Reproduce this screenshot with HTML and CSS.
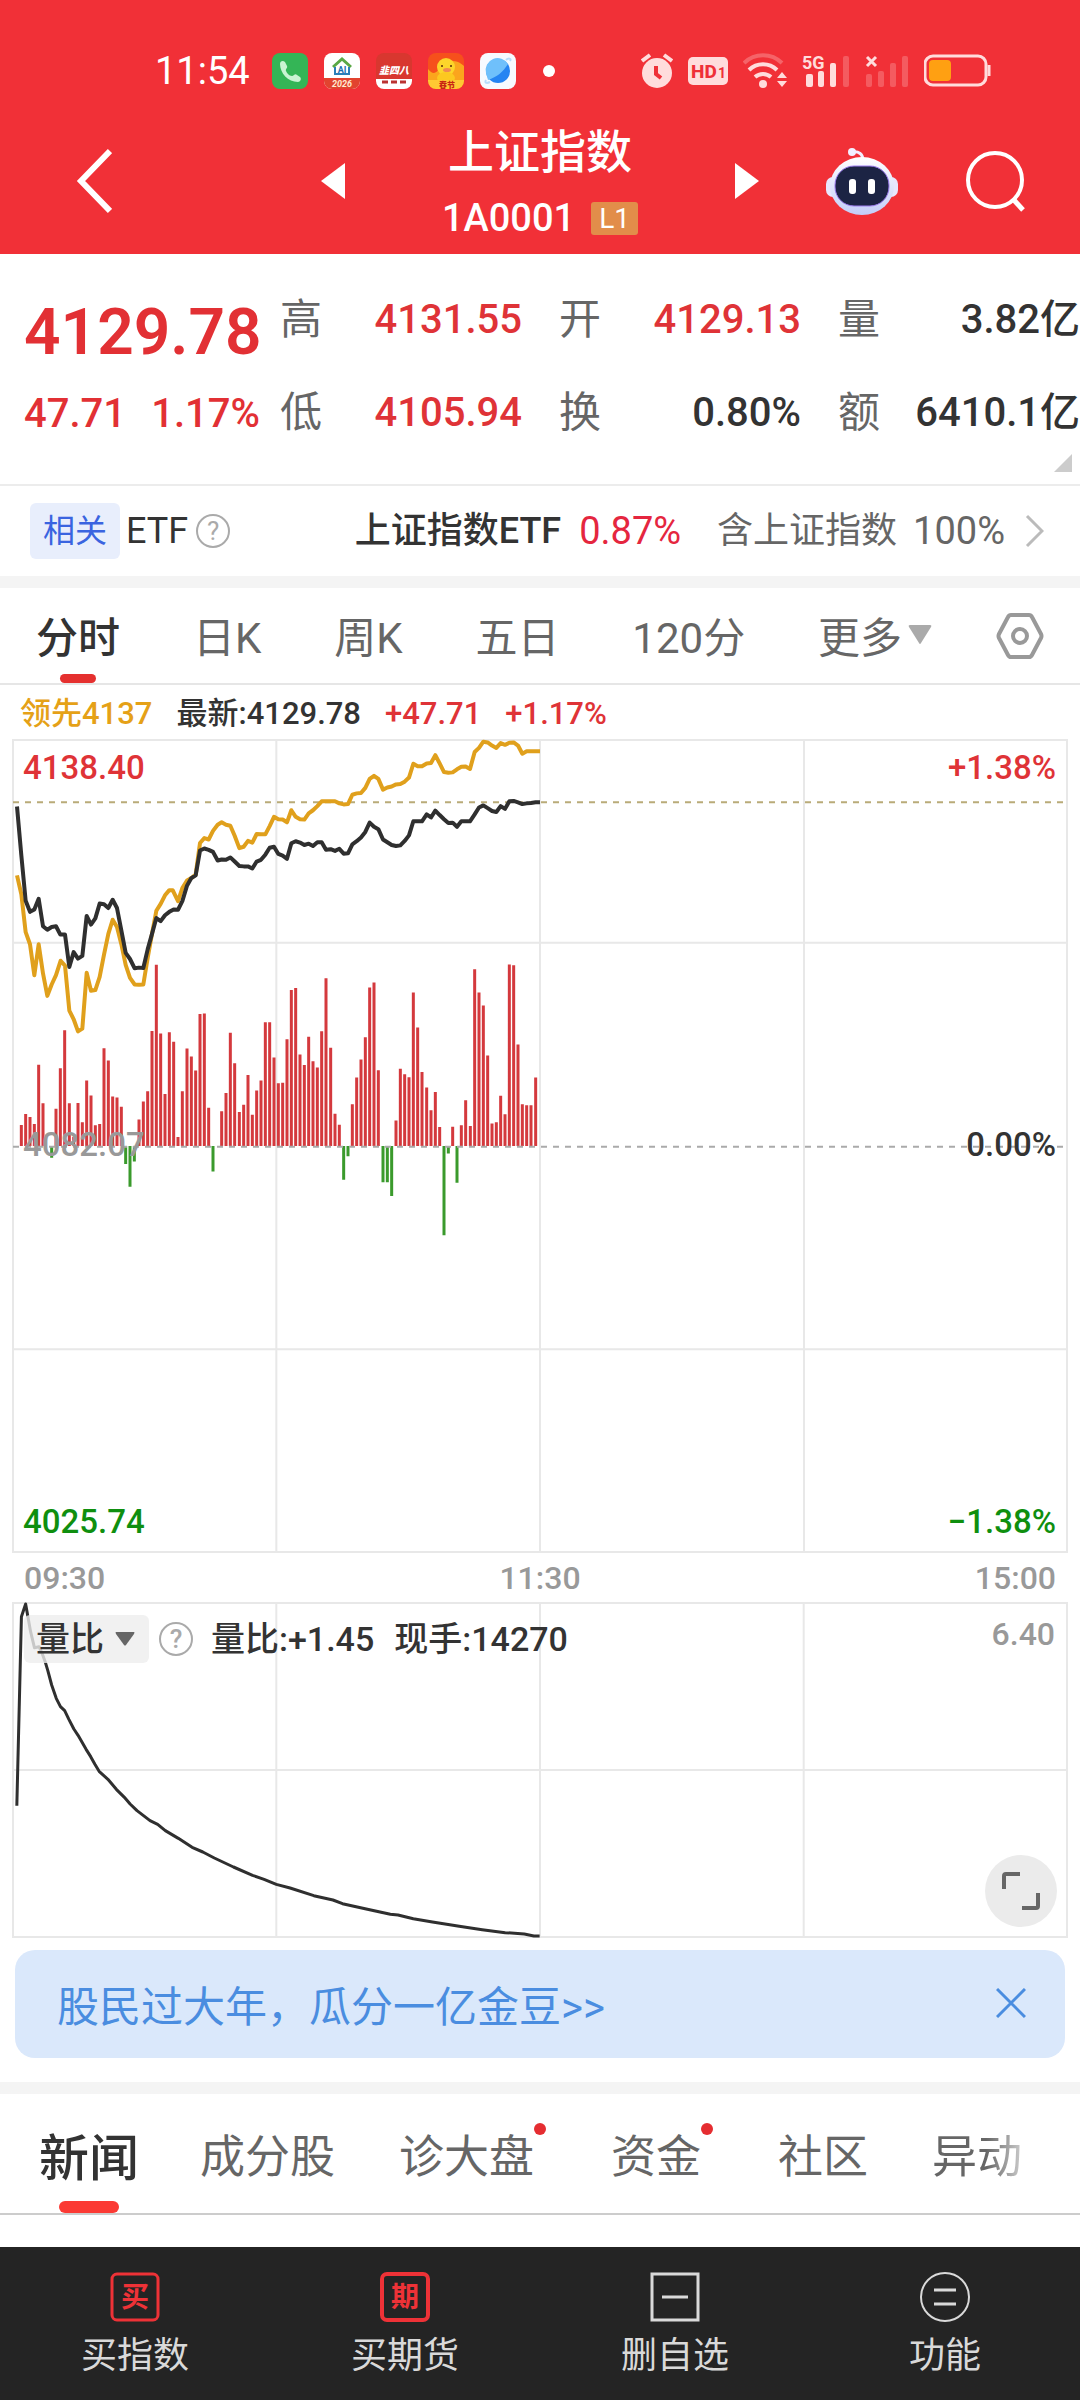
FILE: index.html
```html
<!DOCTYPE html>
<html lang="zh-CN">
<head>
<meta charset="utf-8">
<meta name="viewport" content="width=device-width">
<title>上证指数 1A0001</title>
<link rel="stylesheet" href="styles.css">
</head>
<body>
<div class="page">
  <header class="header">
    <div class="status">
      <div class="status-left">
        <span class="clock">11:54</span>
        <svg class="app" viewBox="0 0 36 36"><rect width="36" height="36" rx="8" fill="#34b556"/><path d="M8 11c0-3 3-4 5-2l2 4c1 2-2 3-1 5 1 2 3 5 6 5 2 0 3-3 5-1l3 2c2 2 0 5-2 5C16 29 8 20 8 11z" fill="#c9f3d2"/></svg>
        <svg class="app" viewBox="0 0 36 36"><rect width="36" height="36" rx="8" fill="#fff"/><path d="M0 25h36v3a8 8 0 0 1-8 8H8a8 8 0 0 1-8-8z" fill="#e2432f"/><path d="M9 14 18 6l9 8" fill="none" stroke="#5aa845" stroke-width="3"/><path d="M11 14v7h14v-7" fill="none" stroke="#2b7fb8" stroke-width="2"/><text x="18" y="20" font-size="9" font-weight="700" text-anchor="middle" fill="#1c6fb0">AI</text><text x="18" y="34" font-size="9" font-style="italic" font-weight="700" text-anchor="middle" fill="#ffe9d0">2026</text></svg>
        <svg class="app" viewBox="0 0 36 36"><rect width="36" height="36" rx="8" fill="#d8372f"/><path d="M0 26h36v2a8 8 0 0 1-8 8H8a8 8 0 0 1-8-8z" fill="#fff"/><text x="18" y="21" font-size="10" font-style="italic" font-weight="900" text-anchor="middle" fill="#fff">韭四八</text><path d="M6 29h6M15 29h6M24 29h6" stroke="#b33" stroke-width="3"/></svg>
        <svg class="app" viewBox="0 0 36 36"><rect width="36" height="36" rx="8" fill="#f6501c"/><path d="M25 8c6 0 11 5 11 5v15H0V16c6 8 10 2 12-2z" fill="#fba51d"/><circle cx="18" cy="14" r="9" fill="#fcd52b"/><ellipse cx="18" cy="25" rx="9" ry="6" fill="#fcc820"/><circle cx="14" cy="13" r="1" fill="#5b2a08"/><circle cx="23" cy="13" r="1" fill="#5b2a08"/><ellipse cx="19" cy="17" rx="4" ry="2" fill="#f08a50"/><path d="M0 27h36v1a8 8 0 0 1-8 8H8a8 8 0 0 1-8-8z" fill="#ffc933"/><text x="19" y="35" font-size="8" font-weight="900" text-anchor="middle" fill="#c92713">春节</text></svg>
        <svg class="app" viewBox="0 0 36 36"><rect width="36" height="36" rx="8" fill="#f7faff"/><circle cx="18" cy="18" r="12" fill="#2584f2"/><path d="M6 20a12 12 0 0 1 22-9c-5 8-11 13-20 16z" fill="#6fc0fb"/><path d="M30 8c2-3-2-3-4-1M6 27c-2 4 2 3 4 2" stroke="#b7dcfb" fill="none" stroke-width="2"/></svg>
        <span class="more-dot"></span>
      </div>
      <div class="status-right">
        <svg width="32" height="36" viewBox="0 0 32 36"><circle cx="16" cy="20" r="15" fill="#ffdcdc"/><path d="M1 8 9 2M31 8l-8-6" stroke="#ffdcdc" stroke-width="4"/><path d="M15 13v8l5 4" fill="none" stroke="#ef3038" stroke-width="4"/></svg>
        <svg width="40" height="36" viewBox="0 0 40 36"><rect y="4" width="40" height="28" rx="5" fill="#ffdcdc"/><text x="3" y="25" font-size="19" font-weight="800" fill="#ef3038">HD</text><text x="30" y="25" font-size="14" font-weight="700" fill="#ef3038">1</text></svg>
        <svg width="44" height="36" viewBox="0 0 44 36"><g fill="none" stroke="#ffdcdc" stroke-width="4"><path d="M1 10a27 27 0 0 1 38 0" opacity=".3"/><path d="M6 17a20 20 0 0 1 28 0"/><path d="M12 24a12 12 0 0 1 16 0"/></g><circle cx="20" cy="31" r="4" fill="#ffdcdc"/><path d="M34 25h10l-5-6zM34 28h10l-5 6z" fill="#ffdcdc"/></svg>
        <svg width="48" height="36" viewBox="0 0 48 36"><text x="0" y="16" font-size="18" font-weight="700" fill="#ffdcdc">5G</text><g fill="#ffdcdc"><rect x="4" y="21" width="7" height="13" rx="2"/><rect x="16" y="18" width="6" height="16" rx="2"/><rect x="28" y="10" width="6" height="24" rx="2"/><rect x="41" y="3" width="6" height="31" rx="2" opacity=".25"/></g></svg>
        <svg width="44" height="36" viewBox="0 0 44 36"><path d="m2 4 9 9m0-9-9 9" stroke="#ffdcdc" stroke-width="3"/><g fill="#ffdcdc" opacity=".25"><rect x="1" y="21" width="6" height="13" rx="2"/><rect x="13" y="18" width="6" height="16" rx="2"/><rect x="25" y="10" width="6" height="24" rx="2"/><rect x="37" y="3" width="6" height="31" rx="2"/></g></svg>
        <svg width="67" height="36" viewBox="0 0 67 36"><rect x="1" y="3" width="61" height="29" rx="8" fill="none" stroke="#ffdcdc" stroke-width="3"/><rect x="5" y="7" width="22" height="21" rx="4" fill="#ffa012"/><path d="M65 12v11" stroke="#ffdcdc" stroke-width="3"/></svg>
      </div>
    </div>
    <div class="nav">
      <button class="icon-btn" aria-label="返回"><svg width="36" height="66" viewBox="0 0 36 66"><path d="M34 3 5 33l29 30" fill="none" stroke="#fff" stroke-width="6"/></svg></button>
      <div class="nav-center">
        <button class="icon-btn" aria-label="上一个"><svg width="24" height="36" viewBox="0 0 24 36"><path d="M24 0v36L0 18z" fill="#fff"/></svg></button>
        <div class="title-block">
          <h1 class="title">上证指数</h1>
          <div class="code-row"><span class="code">1A0001</span><span class="level">L1</span></div>
        </div>
        <button class="icon-btn" aria-label="下一个"><svg width="24" height="36" viewBox="0 0 24 36"><path d="M0 0v36l24-18z" fill="#fff"/></svg></button>
      </div>
      <div class="nav-right">
        <button class="icon-btn" aria-label="智能助手"><svg width="72" height="68" viewBox="0 0 72 68"><defs><linearGradient id="shell" x1="0" y1="0" x2="0" y2="1"><stop offset="0" stop-color="#fff"/><stop offset="1" stop-color="#c3cdf8"/></linearGradient></defs><path d="M26 5c7-1 11 2 11 9" fill="none" stroke="#f3efff" stroke-width="3"/><circle cx="26" cy="5" r="4" fill="#f3efff"/><rect y="30" width="72" height="20" rx="7" fill="#e8e6fd"/><ellipse cx="36" cy="39" rx="32" ry="29" fill="url(#shell)"/><rect x="9" y="19" width="54" height="40" rx="19" fill="#1c2444" stroke="#9d7cf0" stroke-width="1"/><rect x="23" y="32" width="7" height="15" rx="3" fill="#fff"/><rect x="42" y="32" width="7" height="15" rx="3" fill="#fff"/></svg></button>
        <button class="icon-btn" aria-label="搜索"><svg width="60" height="62" viewBox="0 0 60 62"><circle cx="29" cy="30" r="27" fill="none" stroke="#fff" stroke-width="4"/><path d="m47 49 10 11" stroke="#fff" stroke-width="5"/></svg></button>
      </div>
    </div>
  </header>

  <main>
    <section class="quote">
      <div class="quote-main">
        <strong class="price">4129.78</strong>
        <div class="change"><span>47.71</span><span>1.17%</span></div>
      </div>
      <dl class="stats">
        <div class="stat"><dt>高</dt><dd class="up">4131.55</dd></div>
        <div class="stat"><dt>开</dt><dd class="up">4129.13</dd></div>
        <div class="stat"><dt>量</dt><dd>3.82亿</dd></div>
        <div class="stat"><dt>低</dt><dd class="up">4105.94</dd></div>
        <div class="stat"><dt>换</dt><dd>0.80%</dd></div>
        <div class="stat"><dt>额</dt><dd>6410.1亿</dd></div>
      </dl>
      <span class="corner"></span>
    </section>

    <section class="etf">
      <span class="tag">相关</span>
      <span>ETF</span>
      <button class="help" aria-label="说明">?</button>
      <a class="etf-link" href="#etf"><span class="etf-name">上证指数ETF</span><span class="etf-rate">0.87%</span><span class="etf-note">含上证指数</span><span class="etf-share">100%</span><svg width="19" height="34" viewBox="0 0 19 34"><path d="m2 2 15 15L2 32" fill="none" stroke="#bbb" stroke-width="3"/></svg></a>
    </section>

    <nav class="periods">
      <button class="period active">分时</button>
      <button class="period">日K</button>
      <button class="period">周K</button>
      <button class="period">五日</button>
      <button class="period">120分</button>
      <button class="period more">更多<svg width="24" height="20" viewBox="0 0 24 20"><path d="M2 0h20q2 0 1 2L13 18q-1 2-2 0L1 2Q0 0 2 0z" fill="#aaa"/></svg></button>
      <button class="icon-btn" aria-label="设置"><svg width="48" height="48" viewBox="0 0 48 48"><path d="M15 3h18q2 0 3 2l9 17q1 2 0 4l-9 17q-1 2-3 2H15q-2 0-3-2L3 26q-1-2 0-4l9-17q1-2 3-2z" fill="none" stroke="#999" stroke-width="4"/><circle cx="24" cy="24" r="7" fill="none" stroke="#999" stroke-width="4"/></svg></button>
    </nav>

    <div class="legend"><span class="lead">领先4137</span><span>最新:4129.78</span><span class="up">+47.71</span><span class="up">+1.17%</span></div>

    <section class="chart">
      <svg class="plot" viewBox="39 57 3162 2358" preserveAspectRatio="none">
        <g class="grid"><path d="M39 57H3201V2415H39zM39 646H3201M39 1826H3201M829 57V2415M1620 57V2415M2412 57V2415"/></g>
        <path class="latest-line" d="M39 238H3201"/>
        <path class="bar-up" d="M64 1236V1175M77 1236V1143M90 1236V1152M103 1236V1172M116 1236V1000M129 1236V1112M168 1236V1128M181 1236V1010M194 1236V900M208 1236V1112M221 1236V1210M234 1236V1111M247 1236V1167M260 1236V1046M273 1236V1089M286 1236V1176M299 1236V1172M312 1236V952M325 1236V988M338 1236V1092M351 1236V1095M364 1236V1122M417 1236V1159M430 1236V1107M443 1236V1077M456 1236V902M469 1236V710M482 1236V909M495 1236V1085M508 1236V906M521 1236V933M534 1236V1210M547 1236V1077M561 1236V953M574 1236V976M587 1236V1017M600 1236V853M613 1236V851M626 1236V1125M665 1236V1135M678 1236V1082M691 1236V907M704 1236V996M718 1236V1137M731 1236V1116M744 1236V1030M757 1236V1145M770 1236V1075M783 1236V1046M796 1236V877M809 1236V877M822 1236V979M835 1236V1054M848 1236V1052M861 1236V926M874 1236V783M887 1236V777M900 1236V970M913 1236V1001M926 1236V919M939 1236V990M952 1236V1008M965 1236V903M978 1236V749M992 1236V951M1005 1236V1142M1018 1236V1174M1057 1236V1115M1070 1236V1037M1083 1236V985M1096 1236V920M1109 1236V776M1122 1236V761M1135 1236V1016M1188 1236V1162M1201 1236V1012M1214 1236V1028M1227 1236V1036M1240 1236V790M1253 1236V892M1266 1236V1021M1280 1236V1066M1293 1236V1132M1306 1236V1079M1319 1236V1181M1358 1236V1180M1384 1236V1176M1397 1236V1103M1411 1236V1178M1424 1236V723M1437 1236V790M1450 1236V828M1463 1236V973M1476 1236V1171M1489 1236V1167M1502 1236V1090M1515 1236V1144M1528 1236V709M1541 1236V711M1554 1236V941M1567 1236V1115M1580 1236V1118M1593 1236V1118M1607 1236V1037"/>
        <path class="bar-down" d="M155 1236V1270M377 1236V1288M390 1236V1354M403 1236V1281M639 1236V1310M1031 1236V1334M1044 1236V1266M1149 1236V1341M1162 1236V1341M1175 1236V1381M1332 1236V1495M1345 1236V1258M1371 1236V1343"/>
        <path class="zero-line" d="M39 1238H3201"/>
        <polyline class="lead-line" points="51,450 64,505 77,615 90,650 103,740 116,650 129,735 142,800 155,767 168,740 182,698 195,712 208,843 221,868 234,903 247,895 260,733 273,785 286,783 299,745 312,680 325,620 338,579 351,600 364,650 377,710 390,748 404,767 417,768 430,767 443,690 456,620 469,553 482,533 495,508 508,493 518,493 534,525 547,487 561,465 574,458 587,448 600,356 613,342 626,346 639,321 653,303 665,296 678,303 691,306 704,335 718,371 731,367 744,350 757,355 770,330 783,331 796,331 809,307 822,280 835,287 848,288 861,296 874,261 887,280 900,287 913,288 926,270 939,261 952,249 965,235 978,235 1005,235 1018,241 1031,244 1044,243 1057,216 1070,212 1083,211 1096,196 1109,170 1122,161 1135,170 1149,201 1162,195 1175,192 1188,186 1201,185 1214,178 1227,166 1240,126 1253,133 1266,133 1280,125 1293,124 1306,101 1319,125 1332,150 1345,152 1358,151 1371,142 1384,135 1397,134 1410,141 1424,92 1437,80 1450,62 1463,64 1476,73 1489,80 1502,66 1515,71 1528,65 1541,64 1554,73 1567,97 1580,90 1620,90"/>
        <polyline class="price-line" points="51,250 64,392 77,524 90,556 103,549 116,518 129,598 142,608 155,600 168,598 181,622 195,622 208,716 221,673 234,692 247,684 260,568 273,593 286,575 299,532 312,534 325,545 338,521 351,545 364,610 377,675 390,693 404,720 417,718 430,719 443,665 456,620 469,574 482,583 495,566 508,556 521,549 534,550 547,525 561,480 574,458 587,450 600,378 613,372 626,376 639,382 653,407 665,404 678,405 691,398 704,410 718,423 731,424 744,424 757,430 770,410 783,405 796,390 809,370 822,367 835,388 848,393 861,402 874,357 887,351 900,355 913,362 926,358 939,365 952,354 965,354 978,376 992,374 1005,379 1018,373 1031,387 1044,386 1057,360 1070,351 1083,340 1096,324 1109,297 1122,309 1135,316 1149,346 1162,354 1175,362 1188,365 1201,363 1214,350 1227,334 1240,293 1253,293 1266,293 1280,273 1293,282 1306,262 1319,275 1332,287 1345,298 1358,297 1371,309 1384,293 1397,293 1410,293 1424,273 1437,253 1450,247 1463,255 1476,263 1489,266 1502,249 1515,257 1528,235 1541,234 1554,238 1567,243 1580,241 1593,240 1607,238 1620,238"/>
      </svg>
      <div class="scale">
        <div class="scale-row up"><span>4138.40</span><span>+1.38%</span></div>
        <div class="scale-row"><span class="base">4082.07</span><span>0.00%</span></div>
        <div class="scale-row down"><span>4025.74</span><span>−1.38%</span></div>
      </div>
    </section>

    <div class="times"><span>09:30</span><span>11:30</span><span>15:00</span></div>

    <section class="chart sub-chart">
      <svg class="plot" viewBox="34 309 2754 1002" preserveAspectRatio="none">
        <g class="grid"><path d="M34 309H2788V1311H34zM34 810H2788M722 309V1311M1411 309V1311M2100 309V1311"/></g>
        <polyline class="ratio-line" points="44,917 56,350 67,312 80,395 90,443 102,440 110,460 118,485 125,512 135,555 147,595 158,620 169,632 180,658 193,687 204,706 225,748 237,770 248,793 259,814 282,838 304,868 325,892 340,912 358,932 392,962 412,973 432,992 466,1015 502,1042 530,1056 560,1074 610,1101 660,1126 690,1138 722,1153 758,1164 820,1187 870,1200 895,1211 960,1228 1020,1243 1040,1245 1080,1256 1130,1266 1200,1279 1260,1289 1320,1298 1370,1302 1395,1308 1410,1308"/>
      </svg>
      <div class="sub-bar">
        <button class="picker">量比<svg width="20" height="14" viewBox="0 0 20 14"><path d="M1 0h18q1 0 0 2L11 13q-1 1-2 0L1 2Q0 0 1 0z" fill="#666"/></svg></button>
        <button class="help" aria-label="量比说明">?</button>
        <span>量比:+1.45</span><span class="hand">现手:14270</span>
        <span class="sub-max">6.40</span>
      </div>
      <button class="expand" aria-label="全屏"><svg width="38" height="38" viewBox="0 0 38 38"><path d="M2 17V4q0-2 2-2h14M36 21v13q0 2-2 2H20" fill="none" stroke="#666" stroke-width="4"/></svg></button>
    </section>

    <div class="banner">
      <a href="#event">股民过大年，瓜分一亿金豆&gt;&gt;</a>
      <button class="icon-btn" aria-label="关闭"><svg width="30" height="30" viewBox="0 0 30 30"><path d="m1 1 28 28m0-28L1 29" stroke="#4a8de0" stroke-width="3"/></svg></button>
    </div>

    <nav class="topics">
      <button class="topic active">新闻</button>
      <button class="topic">成分股</button>
      <button class="topic dotted">诊大盘</button>
      <button class="topic dotted">资金</button>
      <button class="topic">社区</button>
      <button class="topic fading">异动</button>
    </nav>
  </main>

  <footer class="actions">
    <button class="action"><svg width="50" height="50" viewBox="0 0 50 50"><rect x="2" y="2" width="46" height="46" rx="5" fill="none" stroke="#ee3237" stroke-width="3"/><text x="25" y="35" font-size="28" font-weight="700" text-anchor="middle" fill="#ee3237">买</text></svg><span>买指数</span></button>
    <button class="action"><svg width="50" height="50" viewBox="0 0 50 50"><rect x="2" y="2" width="46" height="46" rx="5" fill="none" stroke="#ee3237" stroke-width="4"/><text x="25" y="35" font-size="28" font-weight="700" text-anchor="middle" fill="#ee3237">期</text></svg><span>买期货</span></button>
    <button class="action"><svg width="50" height="50" viewBox="0 0 50 50"><path d="M2 2h46v46H2zM12 25h26" fill="none" stroke="#d9d9d9" stroke-width="3"/></svg><span>删自选</span></button>
    <button class="action"><svg width="50" height="50" viewBox="0 0 50 50"><circle cx="25" cy="25" r="24" fill="none" stroke="#d9d9d9" stroke-width="2"/><path d="M14 18h22M14 32h22" stroke="#d9d9d9" stroke-width="3"/></svg><span>功能</span></button>
  </footer>
</div>
</body>
</html>
```
FILE: styles.css
```css
* { box-sizing: border-box; }
body {
  margin: 0;
  background: #fff;
  color: #333;
  font-family: Roboto, "Noto Sans CJK SC", sans-serif;
}
button {
  margin: 0;
  padding: 0;
  border: 0;
  background: none;
  color: inherit;
  font: inherit;
}
a { color: inherit; text-decoration: none; }
svg { display: block; flex: none; }
.page { display: flex; flex-direction: column; min-height: 100vh; }
.icon-btn { display: flex; flex: none; }
.up { color: #df3337; }
.down { color: #0f8f0f; }

/* Header */
.header { background: #f13037; color: #fff; padding-top: 42px; }
.status {
  display: flex;
  justify-content: space-between;
  align-items: center;
  height: 58px;
  padding: 0 89px 0 155px;
}
.status-left { display: flex; align-items: center; gap: 16px; }
.clock { font-size: 38px; line-height: 44px; margin-right: 6px; }
.app { width: 36px; height: 36px; }
.more-dot { width: 12px; height: 12px; margin-left: 11px; border-radius: 50%; background: #fff; }
.status-right { display: flex; align-items: center; gap: 15px; }
.nav {
  display: grid;
  grid-template-columns: 1fr 438px 1fr;
  align-items: center;
  height: 154px;
  padding-top: 8px;
}
.nav > .icon-btn { padding-left: 76px; }
.nav-center { display: flex; justify-content: space-between; align-items: center; }
.title-block { display: flex; flex-direction: column; align-items: center; padding-top: 6px; }
.title { margin: 0; font-size: 46px; line-height: 68px; font-weight: 500; }
.code-row { display: flex; align-items: center; gap: 16px; height: 64px; }
.code { font-size: 38px; font-weight: 500; }
.level {
  width: 47px;
  border-radius: 3px;
  background: #e28d4a;
  font-size: 28px;
  line-height: 33px;
  text-align: center;
}
.nav-right { display: flex; justify-content: flex-end; align-items: center; gap: 68px; padding-right: 54px; }

/* Quote */
.quote {
  position: relative;
  display: flex;
  height: 232px;
  padding-top: 34px;
  border-bottom: 2px solid #ececec;
}
.quote-main { width: 280px; padding: 0 20px 0 24px; color: #e23034; }
.price { display: block; font-size: 64px; line-height: 90px; font-weight: 600; }
.change { display: flex; justify-content: space-between; font-size: 40px; line-height: 72px; font-weight: 500; }
.stats {
  flex: 1;
  display: grid;
  grid-template-columns: repeat(3, 1fr);
  grid-auto-rows: 93px;
  column-gap: 37px;
  margin: 0;
}
.stat { display: flex; justify-content: space-between; line-height: 64px; white-space: nowrap; }
.stat dt { font-size: 42px; color: #666; }
.stat dd { margin: 0; font-size: 40px; font-weight: 500; }
.corner {
  position: absolute;
  right: 8px;
  bottom: 12px;
  border-left: 18px solid transparent;
  border-bottom: 18px solid #ccc;
}

/* Related ETF */
.etf {
  display: flex;
  align-items: center;
  height: 102px;
  padding: 0 36px 0 30px;
  border-bottom: 12px solid #f4f4f4;
  font-size: 36px;
  white-space: nowrap;
}
.tag {
  width: 90px;
  margin-right: 6px;
  border-radius: 6px;
  background: #e8eefc;
  color: #3a64e0;
  font-size: 32px;
  line-height: 56px;
  text-align: center;
}
.help {
  width: 34px;
  height: 34px;
  margin-left: 8px;
  border: 2px solid #aaa;
  border-radius: 50%;
  color: #aaa;
  font-size: 26px;
  line-height: 30px;
  text-align: center;
}
.etf-link { display: flex; align-items: center; margin-left: auto; line-height: 48px; }
.etf-name { font-weight: 500; }
.etf-rate { margin: 0 36px 0 18px; color: #e5263f; font-size: 38px; }
.etf-note { color: #666; }
.etf-share { margin: 0 20px 0 16px; color: #666; font-size: 38px; }

/* Period tabs */
.periods {
  display: flex;
  justify-content: space-between;
  align-items: center;
  height: 97px;
  padding: 0 36px;
  border-bottom: 2px solid #e6e6e6;
  font-size: 42px;
  color: #666;
}
.period { position: relative; height: 95px; padding-bottom: 2px; }
.period.active { color: #333; font-weight: 500; }
.period.active::after {
  content: "";
  position: absolute;
  left: calc(50% - 18px);
  bottom: 0;
  width: 36px;
  height: 9px;
  border-radius: 5px;
  background: #e5302f;
}
.more { display: flex; align-items: center; gap: 6px; margin-right: -9px; }

/* Charts */
.legend {
  display: flex;
  gap: 24px;
  height: 55px;
  padding: 2px 20px 0;
  font-size: 31px;
  line-height: 53px;
  font-weight: 500;
}
.lead { color: #e5a117; }
.chart { position: relative; margin: 0 13px; }
.plot { width: 100%; height: 812px; overflow: visible; }
.plot path, .plot polyline { fill: none; vector-effect: non-scaling-stroke; }
.plot .grid { stroke: #e8e8e8; stroke-width: 2px; }
.plot .latest-line { stroke: #b9ab78; stroke-width: 2px; stroke-dasharray: 6px 6px; }
.plot .zero-line { stroke: #aaa; stroke-width: 2px; stroke-dasharray: 6px 6px; }
.plot .bar-up { stroke: #d4393d; stroke-width: 3px; }
.plot .bar-down { stroke: #3a9a2c; stroke-width: 3px; }
.plot .lead-line { stroke: #e0a01c; stroke-width: 4px; stroke-linejoin: round; }
.plot .price-line { stroke: #2f2f2f; stroke-width: 4px; stroke-linejoin: round; }
.plot .ratio-line { stroke: #2f2f2f; stroke-width: 3px; stroke-linejoin: round; }
.scale {
  position: absolute;
  inset: 8px 11px 10px 10px;
  display: flex;
  flex-direction: column;
  justify-content: space-between;
  font-size: 33px;
  line-height: 40px;
  font-weight: 500;
}
.scale-row { display: flex; justify-content: space-between; }
.base { color: #999; }
.times {
  display: flex;
  justify-content: space-between;
  padding: 1px 24px 0;
  color: #999;
  font-size: 32px;
  line-height: 50px;
  font-weight: 500;
}
.sub-chart .plot { height: 334px; }
.sub-bar {
  position: absolute;
  top: 11px;
  left: 11px;
  right: 12px;
  display: flex;
  align-items: center;
  font-size: 34px;
  line-height: 50px;
  font-weight: 500;
}
.picker {
  display: flex;
  align-items: center;
  gap: 11px;
  width: 125px;
  height: 48px;
  padding-left: 12px;
  border-radius: 6px;
  background: #eeeeeecc;
}
.sub-bar .help { margin: 0 18px 0 10px; }
.hand { margin-left: 20px; }
.sub-max { margin-left: auto; color: #999; font-size: 32px; line-height: 40px; align-self: flex-start; }
.expand {
  position: absolute;
  right: 10px;
  bottom: 10px;
  display: flex;
  align-items: center;
  justify-content: center;
  width: 72px;
  height: 72px;
  border-radius: 50%;
  background: #ebebeb;
}

/* Promotion */
.banner {
  display: flex;
  justify-content: space-between;
  align-items: center;
  height: 108px;
  margin: 13px 15px 24px;
  padding: 0 39px 2px 42px;
  border-radius: 20px;
  background: #dae8fb;
  color: #4a8de0;
  font-size: 42px;
}

/* Topic tabs */
.topics {
  display: flex;
  gap: 64px;
  height: 133px;
  padding-left: 39px;
  border-top: 12px solid #f4f4f4;
  border-bottom: 2px solid #ccc;
  font-size: 45px;
  color: #666;
  white-space: nowrap;
}
.topic { position: relative; }
.topic.active { margin-right: -3px; color: #333; font-size: 50px; font-weight: 500; }
.topic.active::after {
  content: "";
  position: absolute;
  left: calc(50% - 30px);
  bottom: 0;
  width: 60px;
  height: 12px;
  border-radius: 6px;
  background: #fb3a34;
}
.dotted { margin-right: 13px; }
.dotted::after {
  content: "";
  position: absolute;
  right: -12px;
  top: 29px;
  width: 12px;
  height: 12px;
  border-radius: 50%;
  background: #e52d31;
}
.fading {
  background: linear-gradient(90deg, #666 60%, #ccc);
  background-clip: text;
  -webkit-background-clip: text;
  color: transparent;
}

/* Bottom actions */
.actions {
  display: grid;
  grid-template-columns: repeat(4, 1fr);
  height: 153px;
  margin-top: auto;
  background: #242424;
  color: #d9d9d9;
  font-size: 36px;
}
.action { display: flex; flex-direction: column; align-items: center; gap: 4px; padding-top: 25px; }
```
